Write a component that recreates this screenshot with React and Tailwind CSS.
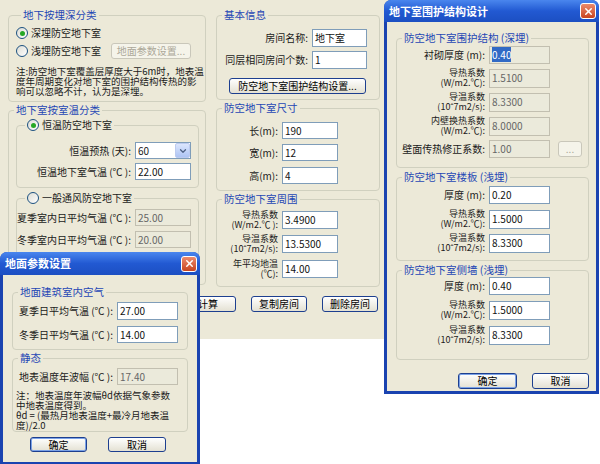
import { ChevronDown, X } from 'lucide-react';

const Field = ({ value, w = 'w-[56px]', h = 'h-[17px]', disabled = false, selected = false }) => (
  <div
    className={`${w} ${h} shrink-0 border px-[2px] pt-[2px] text-[10px] leading-[11px] whitespace-nowrap ${
      disabled ? 'bg-[#ebeadb] border-[#c2bfb0] text-[#666]' : 'bg-white border-[#7f9db9] text-[#111]'
    }`}
  >
    {selected ? <span className="bg-[#316ac5] text-white">{value}</span> : value}
  </div>
);

const Label = ({ w, lines }) => (
  <div
    className={`${w} shrink-0 pr-[4px] text-right text-[#1a1a1a] ${
      lines.length > 1 ? 'text-[9px] leading-[10px]' : 'text-[10px] leading-[12px]'
    }`}
  >
    {lines.map((l, i) => (
      <div key={i} className="whitespace-nowrap">{l}</div>
    ))}
  </div>
);

const Row = ({ label, lw, className = '', children }) => (
  <div className={`flex items-center ${className}`}>
    <Label w={lw} lines={Array.isArray(label) ? label : [label]} />
    {children}
  </div>
);

const Btn = ({ children, w = 'w-[57px]', h = 'h-[16px]', focus = false, disabled = false, className = '' }) => (
  <button
    type="button"
    className={`${w} ${h} ${className} shrink-0 flex items-center justify-center rounded-[3px] border text-[10px] leading-none ${
      disabled
        ? 'border-[#c9c7ba] bg-[#f5f4ea] text-[#aca899]'
        : focus
        ? 'border-[#1d3f8f] bg-linear-to-b from-white to-[#e4e1d3] text-black shadow-[inset_0_0_0_1px_#7ba2e7]'
        : 'border-[#1d3f8f] bg-linear-to-b from-white to-[#e4e1d3] text-black'
    }`}
  >
    {children}
  </button>
);

const Radio = ({ checked, label }) => (
  <span className="flex items-center gap-[3px]">
    <span className="w-[12px] h-[12px] rounded-full border border-[#1c5180] bg-linear-to-br from-[#dcdcd4] to-white flex items-center justify-center">
      {checked && <span className="w-[5px] h-[5px] rounded-full bg-[#25a825]" />}
    </span>
    <span className="text-[10px] leading-[12px] text-[#1a1a1a]">{label}</span>
  </span>
);

const Group = ({ title, className = '', legendClass = 'ml-[5px]', children }) => (
  <fieldset className={`border border-[#d0d0bf] rounded-[4px] ${className}`}>
    <legend className={`${legendClass} px-[2px] text-[10.5px] leading-[12px] text-[#1f47b5] whitespace-nowrap`}>{title}</legend>
    {children}
  </fieldset>
);

const Close = () => (
  <span className="w-[16px] h-[16px] rounded-[3px] border border-white bg-linear-to-b from-[#ec8a6c] to-[#c8431d] flex items-center justify-center">
    <X size={11} strokeWidth={3.2} className="text-white" />
  </span>
);

const TitleBar = ({ title, h }) => (
  <div className={`${h} shrink-0 flex items-center justify-between pl-[5px] pr-[3px] rounded-t-[7px] bg-linear-to-b from-[#4a86ee] via-[#2259d2] to-[#1c4fc2]`}>
    <span className="text-[11px] leading-none font-bold text-white">{title}</span>
    <Close />
  </div>
);

export default function App() {
  return (
    <div className="relative w-[600px] h-[464px] overflow-hidden bg-white font-['Noto_Sans_CJK_SC',sans-serif] text-[#1a1a1a]">
      {/* main window */}
      <div className="w-[390px] h-[339px] bg-[#ece9d8] pt-[9px] pl-[8px]">
        <div className="flex gap-[10px]">
          {/* left column */}
          <div className="w-[198px] flex flex-col gap-[2px]">
            <Group title="地下按埋深分类" className="pl-[7px] pb-[5px]">
              <div className="mt-[6px] h-[12px] flex items-center">
                <Radio checked label="深埋防空地下室" />
              </div>
              <div className="mt-[4px] h-[16px] flex items-center gap-[10px]">
                <Radio label="浅埋防空地下室" />
                <Btn w="w-[80px]" disabled>地面参数设置...</Btn>
              </div>
              <div className="mt-[7px] text-[9.5px] leading-[10px] whitespace-nowrap">
                <div>注:防空地下室覆盖层厚度大于6m时，地表温</div>
                <div>度年周期变化对地下室的围护结构传热的影</div>
                <div>响可以忽略不计，认为是深埋。</div>
              </div>
            </Group>

            <Group title="地下室按室温分类" className="pb-[5px]">
              <Group
                title={<Radio checked label="恒温防空地下室" />}
                legendClass="ml-[8px]"
                className="mt-[3px] ml-[7px] mr-[6px] pb-[7px]"
              >
                <Row lw="w-[118px]" label="恒温预热 (天):" className="mt-[11px]">
                  <div className="w-[56px] h-[17px] shrink-0 border border-[#7f9db9] bg-white flex">
                    <span className="flex-1 pl-[2px] pt-[2px] text-[10px] leading-[11px]">60</span>
                    <span className="w-[15px] h-full rounded-[2px] border border-[#bccbf0] bg-linear-to-b from-[#dce6fd] to-[#aec4f4] flex items-center justify-center">
                      <ChevronDown size={10} strokeWidth={3} className="text-[#4d6185]" />
                    </span>
                  </div>
                </Row>
                <Row lw="w-[118px]" label="恒温地下室气温 (℃ ):" className="mt-[4px]">
                  <Field value="22.00" />
                </Row>
              </Group>

              <Group
                title={<Radio label="一般通风防空地下室" />}
                legendClass="ml-[8px]"
                className="mt-[4px] ml-[7px] mr-[6px] pb-[8px]"
              >
                <Row lw="w-[118px]" label="夏季室内日平均气温 (℃ ):" className="mt-[5px]">
                  <Field value="25.00" disabled />
                </Row>
                <Row lw="w-[118px]" label="冬季室内日平均气温 (℃ ):" className="mt-[5px]">
                  <Field value="20.00" disabled />
                </Row>
                <Row lw="w-[118px]" label="室外计算温度 (℃ ):" className="mt-[5px]">
                  <Field value="15.00" disabled />
                </Row>
              </Group>
            </Group>
          </div>

          {/* middle column */}
          <div className="w-[164px] flex flex-col gap-[2px]">
            <Group title="基本信息" className="pb-[5px]">
              <Row lw="w-[95px]" label="房间名称:" className="mt-[8px]">
                <Field value="地下室" w="w-[55px]" h="h-[18px]" />
              </Row>
              <Row lw="w-[95px]" label="同层相同房间个数:" className="mt-[4px]">
                <Field value="1" w="w-[55px]" h="h-[18px]" />
              </Row>
              <Btn w="w-[137px]" className="mt-[9px] ml-[12px]">防空地下室围护结构设置...</Btn>
            </Group>

            <Group title="防空地下室尺寸" className="pb-[6px]">
              <Row lw="w-[65px]" label="长(m):" className="mt-[8px]">
                <Field value="190" />
              </Row>
              <Row lw="w-[65px]" label="宽(m):" className="mt-[5px]">
                <Field value="12" />
              </Row>
              <Row lw="w-[65px]" label="高(m):" className="mt-[6px]">
                <Field value="4" />
              </Row>
            </Group>

            <Group title="防空地下室周围" className="pb-[7px]">
              <Row lw="w-[65px]" label={['导热系数', '(W/m2.℃ ):']} className="mt-[5px]">
                <Field value="3.4900" h="h-[18px]" />
              </Row>
              <Row lw="w-[65px]" label={['导温系数', '(10ˆ7m2/s):']} className="mt-[4px]">
                <Field value="13.5300" h="h-[18px]" />
              </Row>
              <Row lw="w-[65px]" label={['年平均地温', '(℃):']} className="mt-[5px]">
                <Field value="14.00" h="h-[18px]" />
              </Row>
            </Group>
          </div>
        </div>

        <div className="mt-[9px] pr-[12px] flex justify-end gap-[15px]">
          <Btn w="w-[56px]">计算</Btn>
          <Btn w="w-[56px]">复制房间</Btn>
          <Btn w="w-[56px]">删除房间</Btn>
        </div>
      </div>

      {/* 地下室围护结构设计 dialog */}
      <div className="absolute left-[384px] top-0 w-[215px] h-[394px] flex flex-col rounded-t-[7px] bg-[#1a43b0]">
        <TitleBar title="地下室围护结构设计" h="h-[22px]" />
        <div className="flex-1 mx-[3px] mb-[3px] bg-[#ece9d8] pt-[10px] pl-[9px] pr-[7px]">
          <Group title="防空地下室围护结构 (深埋)" className="pb-[9px]">
            <Row lw="w-[92px]" label="衬砌厚度 (m):" className="mt-[2px]">
              <Field value="0.40" w="w-[61px]" h="h-[18px]" disabled selected />
            </Row>
            <Row lw="w-[92px]" label={['导热系数', '(W/m2.℃):']} className="mt-[4px]">
              <Field value="1.5100" w="w-[61px]" h="h-[19px]" disabled />
            </Row>
            <Row lw="w-[92px]" label={['导温系数', '(10ˆ7m2/s):']} className="mt-[4px]">
              <Field value="8.3300" w="w-[61px]" h="h-[19px]" disabled />
            </Row>
            <Row lw="w-[92px]" label={['内壁换热系数', '(W/m2.℃):']} className="mt-[4px]">
              <Field value="8.0000" w="w-[61px]" h="h-[19px]" disabled />
            </Row>
            <Row lw="w-[92px]" label="壁面传热修正系数:" className="mt-[4px]">
              <Field value="1.00" w="w-[61px]" h="h-[18px]" disabled />
              <Btn w="w-[24px]" className="ml-[8px]" disabled>...</Btn>
            </Row>
          </Group>

          <Group title="防空地下室楼板 (浅埋)" className="mt-[3px] pb-[7px]">
            <Row lw="w-[92px]" label="厚度 (m):" className="mt-[3px]">
              <Field value="0.20" w="w-[61px]" h="h-[18px]" />
            </Row>
            <Row lw="w-[92px]" label={['导热系数', '(W/m2.℃):']} className="mt-[5px]">
              <Field value="1.5000" w="w-[61px]" h="h-[19px]" />
            </Row>
            <Row lw="w-[92px]" label={['导温系数', '(10ˆ7m2/s):']} className="mt-[4px]">
              <Field value="8.3300" w="w-[61px]" h="h-[19px]" />
            </Row>
          </Group>

          <Group title="防空地下室侧墙 (浅埋)" className="mt-[3px] pb-[14px]">
            <Row lw="w-[92px]" label="厚度 (m):" className="mt-[1px]">
              <Field value="0.40" w="w-[61px]" h="h-[18px]" />
            </Row>
            <Row lw="w-[92px]" label={['导热系数', '(W/m2.℃):']} className="mt-[5px]">
              <Field value="1.5000" w="w-[61px]" h="h-[19px]" />
            </Row>
            <Row lw="w-[92px]" label={['导温系数', '(10ˆ7m2/s):']} className="mt-[5px]">
              <Field value="8.3300" w="w-[61px]" h="h-[19px]" />
            </Row>
          </Group>

          <div className="mt-[13px] flex justify-end gap-[15px]">
            <Btn w="w-[59px]" focus>确定</Btn>
            <Btn w="w-[57px]">取消</Btn>
          </div>
        </div>
      </div>

      {/* 地面参数设置 dialog */}
      <div className="absolute left-0 top-[252px] w-[200px] h-[212px] flex flex-col rounded-t-[7px] bg-[#1a43b0]">
        <TitleBar title="地面参数设置" h="h-[23px]" />
        <div className="flex-1 mx-[3px] mb-[2px] bg-[#ece9d8] pt-[11px] px-[9px]">
          <Group title="地面建筑室内空气" className="pb-[6px]">
            <Row lw="w-[104px]" label="夏季日平均气温 (℃ ):" className="mt-[4px]">
              <Field value="27.00" w="w-[61px]" h="h-[18px]" />
            </Row>
            <Row lw="w-[104px]" label="冬季日平均气温 (℃ ):" className="mt-[6px]">
              <Field value="14.00" w="w-[61px]" h="h-[17px]" />
            </Row>
          </Group>

          <Group title="静态" className="mt-[2px] pb-[1px]">
            <Row lw="w-[104px]" label="地表温度年波幅 (℃ ):" className="mt-[4px]">
              <Field value="17.40" w="w-[61px]" h="h-[17px]" disabled />
            </Row>
            <div className="mt-[5px] pl-[3px] text-[9.5px] leading-[10px] whitespace-nowrap">
              <div>注：地表温度年波幅θd依据气象参数</div>
              <div>中地表温度得到。</div>
              <div>θd = (最热月地表温度+最冷月地表温</div>
              <div>度)/2.0</div>
            </div>
          </Group>

          <div className="mt-[5px] pl-[18px] flex gap-[21px]">
            <Btn w="w-[57px]" h="h-[15px]" focus>确定</Btn>
            <Btn w="w-[58px]" h="h-[15px]">取消</Btn>
          </div>
        </div>
      </div>
    </div>
  );
}
